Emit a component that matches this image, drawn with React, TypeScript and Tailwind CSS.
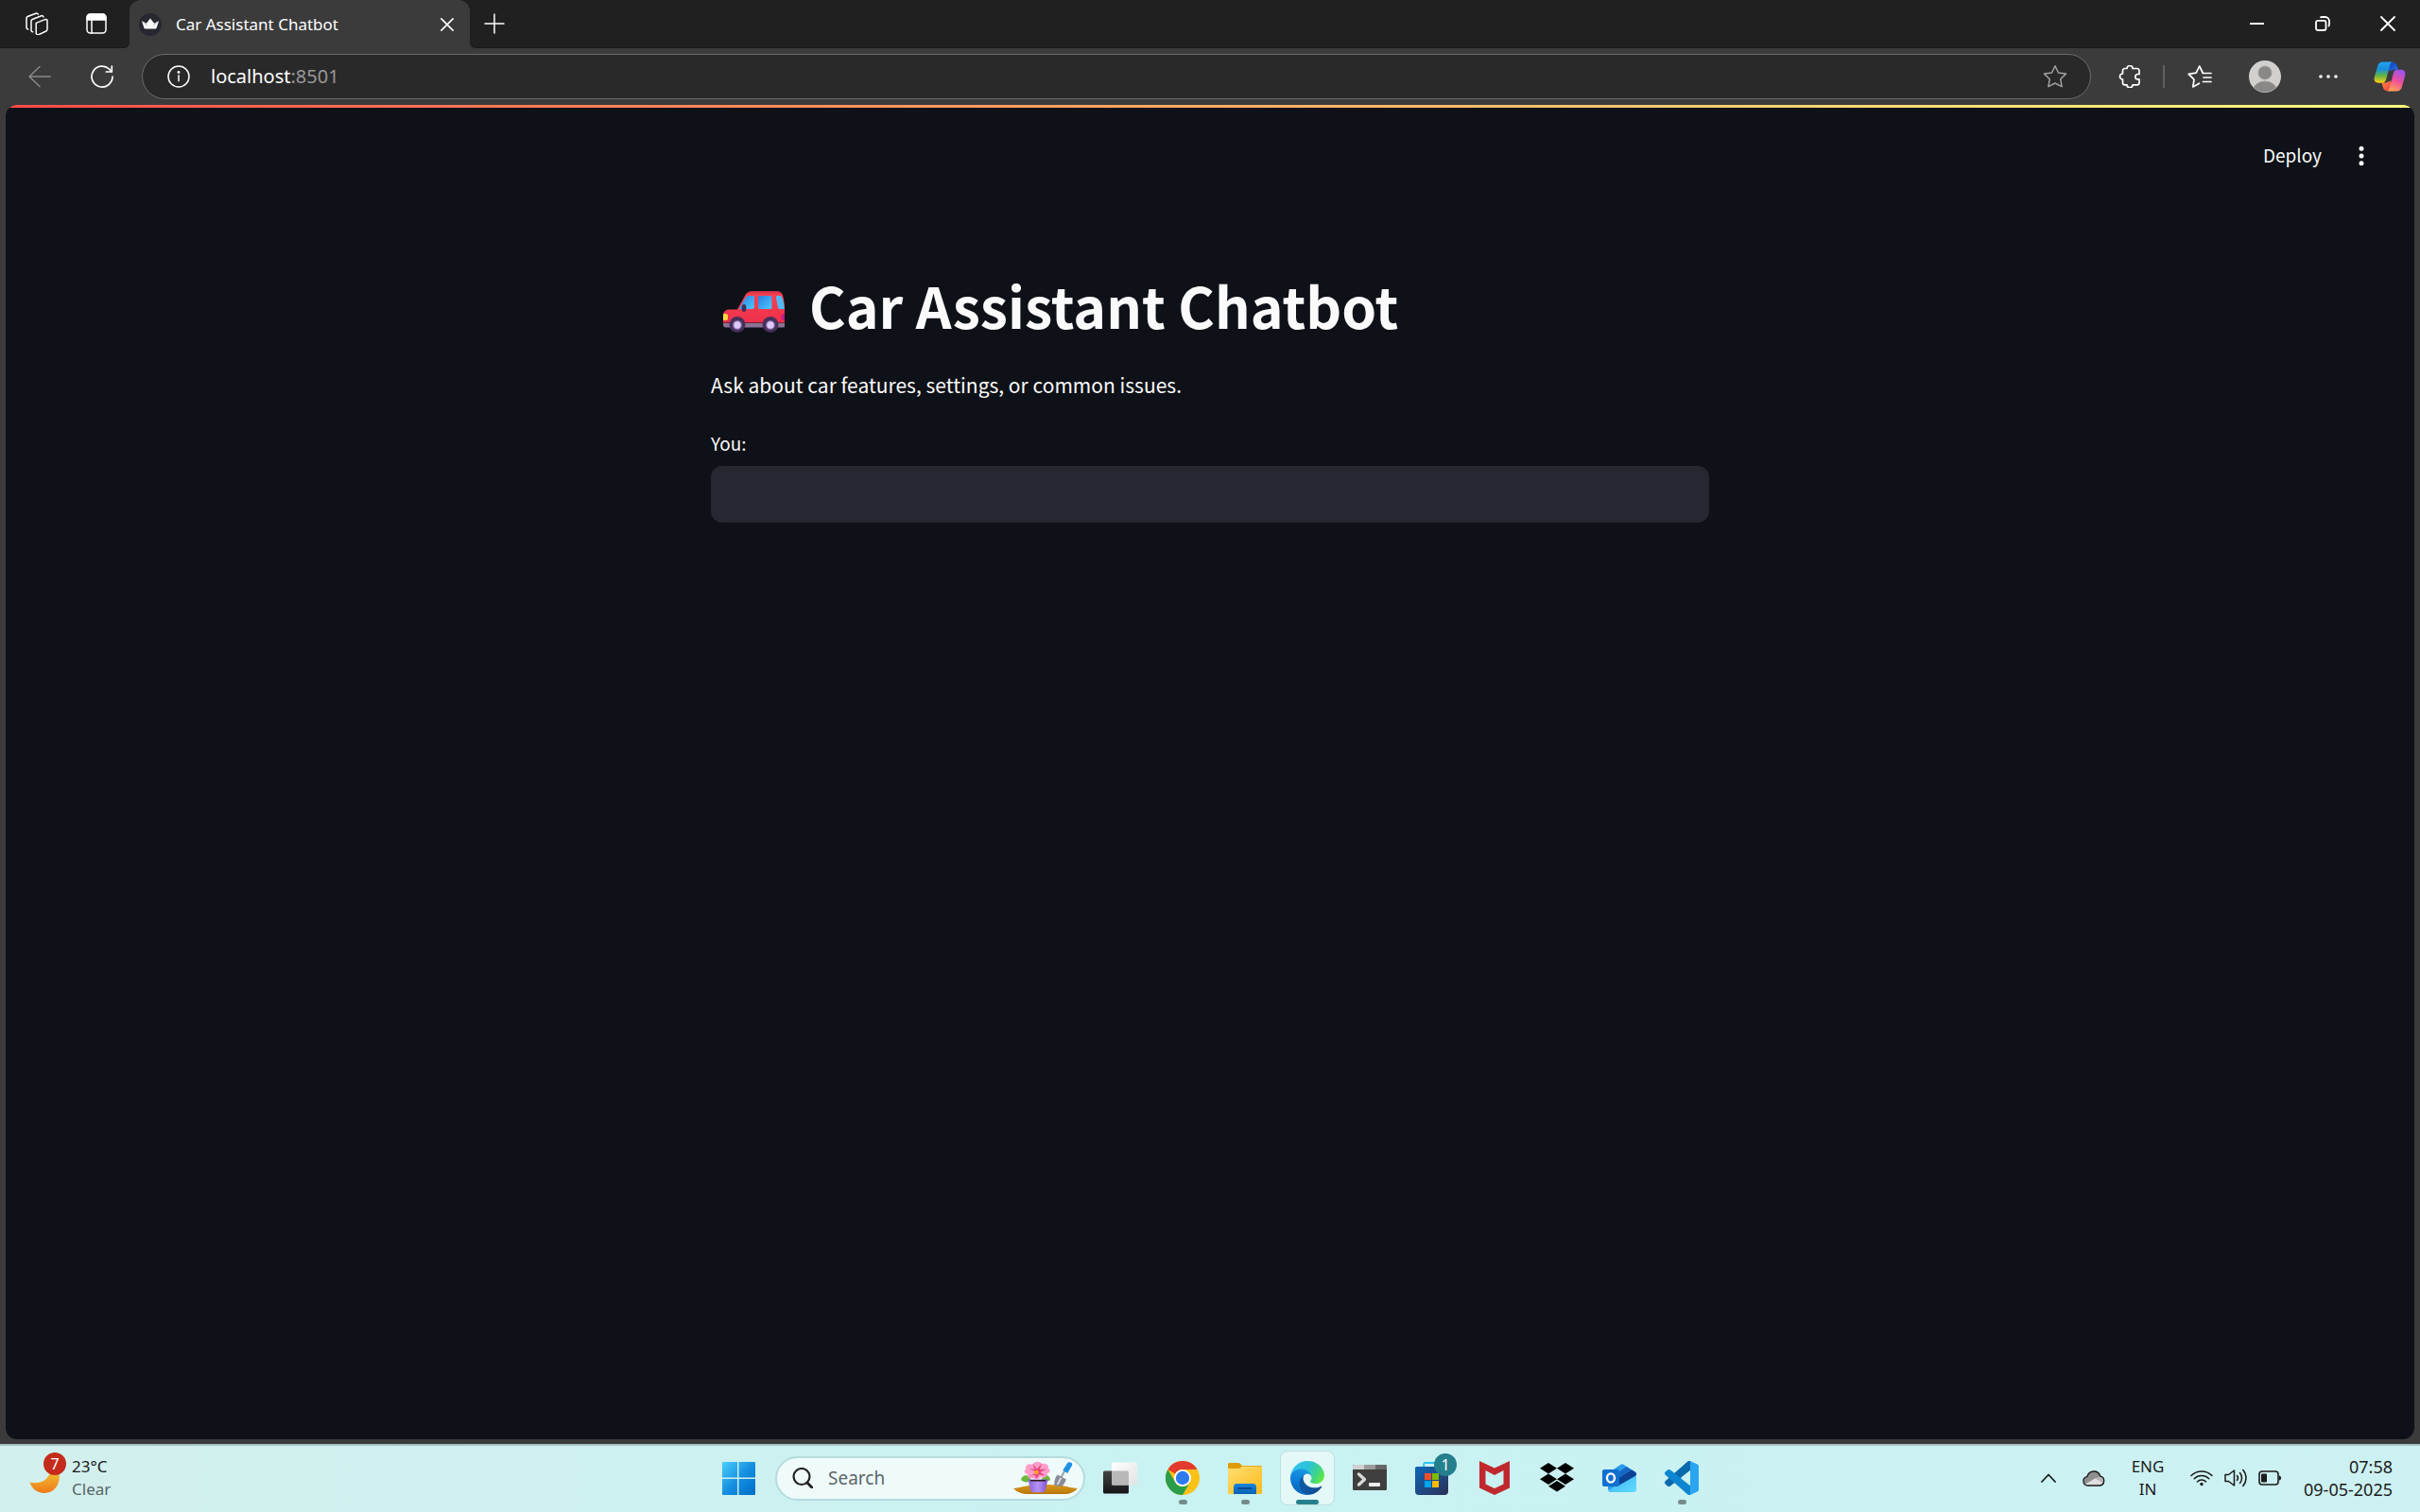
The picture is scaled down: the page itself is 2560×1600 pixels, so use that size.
import type { ReactNode } from "react";

const UI = "font-['Noto_Sans','Open_Sans',sans-serif]";
const PAGE = "font-['Noto_Sans_CJK_SC',sans-serif]";

/* ---------- browser chrome icons ---------- */

const stroke = {
  fill: "none",
  stroke: "currentColor",
  strokeWidth: 1.5,
  strokeLinecap: "round" as const,
  strokeLinejoin: "round" as const,
};

function WorkspacesIcon() {
  return (
    <svg viewBox="0 0 24 24" className="size-6" {...stroke}>
      <path d="M11.2 11.4 20.6 7.6c1.2-.4 2.4.3 2.4 1.4v9c0 .9-.5 1.6-1.300 2L14 23.600c-1.300.4-2.800-.4-2.800-1.700V11.400Z" />
      <path d="M7.600 20.800c-1-.2-1.600-.9-1.600-1.900V9.300c0-.8.500-1.500 1.200-1.800l9.600-3.800c1.100-.4 2 .2 2.200 1.200" />
      <path d="M2.800 17.900C1.600 17.800 1 17 1 16V6.300c0-.8.500-1.500 1.200-1.800l8.600-3.300c1.200-.4 2 0 2.500 1" />
    </svg>
  );
}

function TabActionsIcon() {
  return (
    <svg viewBox="0 0 24 24" className="size-6" {...stroke}>
      <rect x="2" y="2" width="20" height="20" rx="3.500" />
      <path d="M2 8V5.500A3.500 3.500 0 0 1 5.500 2h13A3.500 3.500 0 0 1 22 5.500V8Z" fill="currentColor" />
      <path d="M7 8v14" />
    </svg>
  );
}

function Favicon() {
  return (
    <svg viewBox="0 0 24 24" className="size-6">
      <circle cx="12" cy="12" r="12" fill="#262730" />
      <path d="m3 8.200 4.800 2.600L12 5.500l4.200 5.300L21 8.200 18.600 15.600c-.2.600-.7.900-1.300.9H6.700c-.6 0-1.100-.3-1.300-.9Z" fill="#fafafa" />
      <path d="m3 8.200 4.800 2.600 1.500 3.200ZM21 8.200l-4.800 2.600-1.500 3.200Z" fill="#b9bac0" />
    </svg>
  );
}

function CrossIcon({ className }: { className: string }) {
  return (
    <svg viewBox="0 0 16 16" className={className} {...stroke} strokeWidth={1.8}>
      <path d="m1 1 14 14M15 1 1 15" />
    </svg>
  );
}

function PlusIcon() {
  return (
    <svg viewBox="0 0 22 22" className="size-[22px]" {...stroke}>
      <path d="M11 1v20M1 11h20" />
    </svg>
  );
}

function BackIcon() {
  return (
    <svg viewBox="0 0 24 24" className="size-6" {...stroke}>
      <path d="M23.200 12H1M12 1.500 1 12l11 10.500" />
    </svg>
  );
}

function ReloadIcon() {
  return (
    <svg viewBox="0 0 24 24" className="size-6" {...stroke} strokeWidth={1.700}>
      <path d="M23 12A11 11 0 1 1 19.500 4L22 6.800" />
      <path d="M22.300 1v6h-6" />
    </svg>
  );
}

function InfoIcon() {
  return (
    <svg viewBox="0 0 24 24" className="size-6" {...stroke}>
      <circle cx="12" cy="12" r="11" />
      <path d="M12 10.800v6" />
      <circle cx="12" cy="7.500" r=".7" fill="currentColor" />
    </svg>
  );
}

function StarIcon() {
  return (
    <svg viewBox="0 0 26 26" className="size-[26px]" {...stroke}>
      <path d="M13 1.700 16.500 9l8 1.100-5.800 5.600 1.400 8L13 20l-7.100 3.700 1.400-8L1.500 10.100l8-1.100Z" />
    </svg>
  );
}

function PuzzleIcon() {
  return (
    <svg viewBox="0 0 24 24" className="size-6" {...stroke} strokeWidth={1.700}>
      <path d="M9 3.500a3 3 0 0 1 6 0h4.500A2.300 2.300 0 0 1 22 5.800V9.500h-1.500a2.700 2.700 0 0 0 0 5.400H22v3.600a2.300 2.300 0 0 1-2.300 2.300H15a3 3 0 0 1-6 0H6.800a2.300 2.300 0 0 1-2.300-2.300V15a3 3 0 0 1 0-6V5.800a2.300 2.300 0 0 1 2.300-2.300Z" />
    </svg>
  );
}

function FavoritesIcon() {
  return (
    <svg viewBox="0 0 26 24" className="h-6 w-[26px]" {...stroke} strokeWidth={1.700}>
      <path d="M16.200 8 12.700 1 9.200 8.200 1.200 9.400 7 15.200 5.800 23l6.700-3.800" />
      <path d="M16.200 8.500H25M17 13h8M16.500 17.500H25" />
    </svg>
  );
}

function Avatar() {
  return (
    <svg viewBox="0 0 34 34" className="size-[34px]">
      <defs>
        <clipPath id="avatar-clip">
          <circle cx="17" cy="17" r="16.500" />
        </clipPath>
      </defs>
      <circle cx="17" cy="17" r="17" fill="#d2d0ce" />
      <g clipPath="url(#avatar-clip)" fill="#8a8886" stroke="#a09e9b">
        <circle cx="17" cy="13" r="7" />
        <ellipse cx="17" cy="32" rx="12.500" ry="10" />
      </g>
    </svg>
  );
}

function MoreIcon() {
  return (
    <svg viewBox="0 0 22 6" className="h-1.5 w-[22px]" fill="currentColor">
      <circle cx="3" cy="3" r="1.800" />
      <circle cx="11" cy="3" r="1.800" />
      <circle cx="19" cy="3" r="1.800" />
    </svg>
  );
}

function CopilotIcon() {
  return (
    <svg viewBox="0 0 34 32" className="h-8 w-[34px]">
      <defs>
        <linearGradient id="cp-a" x1="0" y1="0" x2="0" y2="1">
          <stop offset="0" stopColor="#1fa2f0" />
          <stop offset=".35" stopColor="#1a8fdc" />
          <stop offset=".65" stopColor="#5fb548" />
          <stop offset="1" stopColor="#ffcf10" />
        </linearGradient>
        <linearGradient id="cp-b" x1=".7" y1="0" x2=".3" y2="1">
          <stop offset="0" stopColor="#9b52f0" />
          <stop offset=".5" stopColor="#ee4f9b" />
          <stop offset="1" stopColor="#ffa750" />
        </linearGradient>
        <linearGradient id="cp-c" x1="0" y1="0" x2="1" y2="1">
          <stop offset="0" stopColor="#1237b5" />
          <stop offset="1" stopColor="#2377ee" />
        </linearGradient>
        <linearGradient id="cp-d" x1="0" y1="0" x2="1" y2="1">
          <stop offset="0" stopColor="#ff8a3c" />
          <stop offset="1" stopColor="#f03a4a" />
        </linearGradient>
      </defs>
      <path d="M15 1h5.500c2 0 3.300 1 4 3l1.500 4.500h-4.500l-5 2Z" fill="url(#cp-c)" />
      <path d="M19 31h-5c-2 0-3.300-1-4-3L8.500 22.500H13l5-2Z" fill="url(#cp-d)" />
      <path d="M9.500.5H21c-2 0-3 1-3.600 3L13 19.500c-.6 2-1.800 3.200-4 3.200H5C1.500 22.700 0 20.500.8 16.500L4.300 4.500C5.200 1.800 7 .5 9.500.5Z" fill="url(#cp-a)" />
      <path d="M24.500 31.500H13c2 0 3-1 3.600-3L21 12c.6-2 1.800-3.200 4-3.200h4c3.500 0 5 2.200 4.200 6.200l-3.500 12.500c-.9 2.700-2.700 4-5.200 4Z" fill="url(#cp-b)" />
    </svg>
  );
}

/* ---------- page drawings ---------- */

function CarEmoji() {
  return (
    <svg viewBox="10 14 66 44" className="mt-3.5 h-11 w-[66px] shrink-0" role="img" aria-label="car">
      <defs>
        <linearGradient id="car-glass" x1="0" y1="0" x2="1" y2="1">
          <stop offset="0" stopColor="#2b7fe0" />
          <stop offset="1" stopColor="#4cc8ff" />
        </linearGradient>
        <linearGradient id="car-roof" x1="0" y1="0" x2="0" y2="1">
          <stop offset="0" stopColor="#c93048" />
          <stop offset=".12" stopColor="#f8404f" />
          <stop offset="1" stopColor="#ee304c" />
        </linearGradient>
      </defs>
      <path d="M10 48h65v3.500a1 1 0 0 1-1 1H13a3 3 0 0 1-3-3Z" fill="#8a7294" />
      <path d="M10 40c0-4 2.500-6.500 6.500-6.500H25l8-14.500c2-3.500 4-5 8-5h26c3 0 5 1.500 6 4.500 1.500 5 2 9 2 14.500v14.500H10Z" fill="url(#car-roof)" />
      <path d="m27 32.500 6.500-11c1-1.700 2-2.500 4-2.500h5.500v12a2 2 0 0 1-2 2h-13.500Z" fill="url(#car-glass)" />
      <rect x="47" y="19" width="14.500" height="14" rx="1.500" fill="url(#car-glass)" />
      <path d="M67 19h3c1 0 1.600.5 2 1.500 1.800 4 2.500 8 2.800 12.500h-4c-1.800 0-2.600-.6-2.900-2L66 21c-.2-1.200.1-2 1-2Z" fill="#4cbdf8" />
      <ellipse cx="32" cy="32" rx="2.400" ry="4" fill="#3a2e5c" />
      <path d="M10 38h2.500a2.500 2.500 0 0 1 2.500 2.500v2a2.500 2.500 0 0 1-2.500 2.500H10Z" fill="#ffd83a" />
      <path d="M75 38h-1.200a3 3 0 0 0-2.300 3.500 3 3 0 0 0 2.300 3.500H75Z" fill="#c01c86" />
      <circle cx="25" cy="49.500" r="8.500" fill="#46305a" />
      <circle cx="60" cy="49.500" r="8.500" fill="#46305a" />
      <circle cx="25" cy="50" r="5" fill="#8a6ca6" />
      <circle cx="60" cy="50" r="5" fill="#8a6ca6" />
      <circle cx="25" cy="50" r="3.700" fill="#ddc9f8" />
      <circle cx="60" cy="50" r="3.700" fill="#ddc9f8" />
    </svg>
  );
}

/* ---------- taskbar drawings ---------- */

function MoonIcon() {
  return (
    <svg viewBox="0 0 34 34" className="size-[34px]">
      <defs>
        <linearGradient id="moon" x1="0" y1="0" x2="0" y2="1">
          <stop offset=".3" stopColor="#f0b02c" />
          <stop offset="1" stopColor="#f07818" />
        </linearGradient>
      </defs>
      <path d="M31 9c5 10-1 24-14 24C9 33 3.500 28 1.500 21.500 12 24 22 20 23.500 8Z" fill="url(#moon)" />
    </svg>
  );
}

function StartIcon() {
  return (
    <svg viewBox="0 0 36 36" className="size-9">
      <defs>
        <linearGradient id="start" gradientUnits="userSpaceOnUse" x1="0" y1="0" x2="34" y2="34">
          <stop offset="0" stopColor="#4cd2ff" />
          <stop offset=".55" stopColor="#1590e0" />
          <stop offset="1" stopColor="#0070cc" />
        </linearGradient>
      </defs>
      <g fill="url(#start)">
        <path d="M2 1h15v16.500H1V2a1 1 0 0 1 1-1ZM18.500 1H35a1 1 0 0 1 1 1v15.500H18.500ZM1 19h16v17H2a1 1 0 0 1-1-1ZM18.500 19H36v16a1 1 0 0 1-1 1H18.500Z" />
      </g>
    </svg>
  );
}

function SearchIcon() {
  return (
    <svg viewBox="0 0 22 22" className="size-[22px]" fill="none" stroke="#202020" strokeWidth="2.200" strokeLinecap="round">
      <circle cx="10" cy="9.500" r="8.500" />
      <path d="m16 16 4.800 5" strokeWidth="2.800" />
    </svg>
  );
}

function GardenIcon() {
  return (
    <svg viewBox="0 0 68 36" className="h-9 w-[68px]">
      <defs>
        <linearGradient id="soil" x1="0" y1="0" x2="0" y2="1">
          <stop offset="0" stopColor="#d99a1c" />
          <stop offset="1" stopColor="#b87508" />
        </linearGradient>
        <linearGradient id="pot" x1="0" y1="0" x2="1" y2="0">
          <stop offset="0" stopColor="#8a62dc" />
          <stop offset=".5" stopColor="#b592f4" />
          <stop offset="1" stopColor="#7a50cc" />
        </linearGradient>
      </defs>
      <path d="M0 29c10-1 12-4 34-4s22 3 34 4c-4 4-8 6-14 6H16C9 35 4 33 0 29Z" fill="url(#soil)" />
      <path d="M8 20c1-4 4-6 9-4l2 5c-4 2-8 2-11-1ZM39 20c0-3-2-5-6-5l-4 5c3 2 7 2 10 0Z" fill="#6db83a" />
      <path d="M15.500 19.500h21l-2.500 11c-.5 2-2 2.800-4 2.800h-8c-2 0-3.500-.8-4-2.800Z" fill="url(#pot)" />
      <path d="M18 20h16v1.500H18Z" fill="#2c1d18" />
      <path d="M13 9c-1-4 3-7 7-5 2-4 8-4 10-1 4-1 8 1 7 5 3 1 2 5-1 5 0 4-4 6-7 4-2 3-6 3-8 1-4 1-7-1-6-4-4-1-4-4-2-5Z" fill="#ff9ecb" />
      <path d="m24.500 12-8-4 6 1-2-6 4.500 5.500 5-6-2 6.500 7-.5-6.500 3.500 5 3.500-6.500-1-2.500 4.500-2-4.500-6 2Z" fill="#e8487f" />
      <circle cx="24.500" cy="12" r="2.200" fill="#f7a51e" />
      <path d="m60 1.500 1.500.5c1 .8 1 2 .4 3l-4.700 8-5-3 4.800-7.500c.8-1.200 1.800-1.600 3-1Z" fill="#1e90e8" />
      <path d="m54 11-4 7" stroke="#9aa0a6" strokeWidth="2" />
      <path d="m46.500 14.500 9.500 5-2.500 5c-2 2.500-6 3-10 1.500-.8-3 .5-8 3-11.500Z" fill="#878d96" />
      <path d="m50.500 18-4 7" stroke="#d7dadf" strokeWidth="2" />
    </svg>
  );
}

function TaskViewIcon() {
  return (
    <svg viewBox="0 0 36 36" className="size-9">
      <defs>
        <linearGradient id="tv-d" x1="0" y1="0" x2="0" y2="1">
          <stop offset="0" stopColor="#444" />
          <stop offset="1" stopColor="#151515" />
        </linearGradient>
        <linearGradient id="tv-l" x1="0" y1="0" x2="1" y2="1">
          <stop offset="0" stopColor="#fff" />
          <stop offset="1" stopColor="#e2e2e2" />
        </linearGradient>
      </defs>
      <rect x="0" y="10.500" width="27" height="24" rx="1.500" fill="url(#tv-d)" />
      <rect x="9" y="1.500" width="27" height="24" rx="1.500" fill="url(#tv-l)" />
      <path d="M9 10.500h16.500a1.500 1.500 0 0 1 1.500 1.500v13.500H10.500A1.500 1.500 0 0 1 9 24Z" fill="#b8b8b8" />
    </svg>
  );
}

function ChromeIcon() {
  return (
    <svg viewBox="0 0 36 36" className="size-9">
      <circle cx="18" cy="18" r="18" fill="#fbc116" />
      <path d="M2.400 9A18 18 0 0 1 33.600 9H18a9 9 0 0 0-7.800 4.500Z" fill="#e33b2e" />
      <path d="M2.400 9A18 18 0 0 0 18 36l7.800-13.500a9 9 0 0 1-15.600 0Z" fill="#2a9d4a" />
      <circle cx="18" cy="18" r="9" fill="#fff" />
      <circle cx="18" cy="18" r="7.200" fill="#2f7bee" />
    </svg>
  );
}

function ExplorerIcon() {
  return (
    <svg viewBox="0 0 36 36" className="size-9">
      <defs>
        <linearGradient id="folder" x1="0" y1="0" x2="1" y2="1">
          <stop offset="0" stopColor="#ffdf75" />
          <stop offset="1" stopColor="#fbb917" />
        </linearGradient>
        <linearGradient id="folder-blue" x1="0" y1="0" x2="0" y2="1">
          <stop offset="0" stopColor="#1686dc" />
          <stop offset="1" stopColor="#0a62b4" />
        </linearGradient>
      </defs>
      <path d="M0 3.500A1.500 1.500 0 0 1 1.500 2h9.700c.6 0 1 .2 1.400.6L15 5h19.500A1.500 1.500 0 0 1 36 6.500V10H0Z" fill="#dd9c0a" />
      <path d="M0 8h11.500c.7 0 1.300-.3 1.800-.8L15 5.800h21v27.700a1.500 1.500 0 0 1-1.500 1.500h-33A1.500 1.500 0 0 1 0 33.500Z" fill="url(#folder)" />
      <path d="M6 27.500a3.500 3.500 0 0 1 3.500-3.500h17a3.500 3.500 0 0 1 3.500 3.500V35H6Z" fill="url(#folder-blue)" />
      <rect x="10" y="28" width="15.500" height="2" rx="1" fill="#0a4a90" />
    </svg>
  );
}

function EdgeIcon() {
  return (
    <svg viewBox="0 0 256 256" className="size-9">
      <defs>
        <linearGradient id="edge-a" x1=".2" y1=".5" x2="1" y2=".5">
          <stop offset="0" stopColor="#0c59a4" />
          <stop offset="1" stopColor="#114a8b" />
        </linearGradient>
        <linearGradient id="edge-b" x1=".6" y1="0" x2=".3" y2="1">
          <stop offset="0" stopColor="#1b9de2" />
          <stop offset=".5" stopColor="#0b7fd8" />
          <stop offset="1" stopColor="#0a60b8" />
        </linearGradient>
        <linearGradient id="edge-c" x1="0" y1=".3" x2="1" y2=".7">
          <stop offset="0" stopColor="#35c1f1" />
          <stop offset=".45" stopColor="#2cc3d5" />
          <stop offset=".8" stopColor="#44d87a" />
          <stop offset="1" stopColor="#66eb3c" />
        </linearGradient>
      </defs>
      <path d="M231 190.500c-3.400 1.800-7 3.400-10.600 4.700a101.900 101.900 0 0 1-35.900 6.400c-47.300 0-88.500-32.500-88.500-74.300a31.500 31.500 0 0 1 16.400-27.300c-42.800 1.800-53.800 46.400-53.800 72.500 0 74 68.100 81.400 82.800 81.400 7.900 0 19.800-2.300 27-4.600l1.300-.4a128.300 128.300 0 0 0 66.600-52.800 4 4 0 0 0-5.300-5.600Z" fill="url(#edge-a)" />
      <path d="M105.700 241.400a79.200 79.200 0 0 1-22.700-21.300 80.700 80.700 0 0 1 29.500-120c3.100-1.500 8.500-4.100 15.600-4a32.400 32.400 0 0 1 25.700 13c4.100 5.500 6.300 11.700 6.300 18.600 0-.2 24.400-79.600-80-79.600-43.900 0-80 41.700-80 78.200a130.200 130.200 0 0 0 12 56 128 128 0 0 0 156.400 67 75.500 75.500 0 0 1-62.800-7.900Z" fill="url(#edge-b)" />
      <path d="M152.300 148.900c-.9 1-3.400 2.500-3.400 5.600 0 2.600 1.700 5.200 4.800 7.300 14.300 10 41.400 8.600 41.500 8.600a59.600 59.600 0 0 0 30.300-8.400 61.400 61.400 0 0 0 30.400-52.800c.3-22.400-8-37.300-11.300-43.900C223.500 23.900 177.700 0 128 0A128 128 0 0 0 0 126.200c.5-36.500 36.800-66 80-66 3.500 0 23.500.3 42 10a72.600 72.600 0 0 1 30.900 29.400c6.100 10.600 7.200 24.100 7.200 29.500s-2.700 13.300-7.800 19.800Z" fill="url(#edge-c)" />
    </svg>
  );
}

function TerminalIcon() {
  return (
    <svg viewBox="0 0 36 36" className="size-9">
      <rect x="0" y="4" width="36" height="27" rx="1.500" fill="#3f3f3f" />
      <path d="M1.500 4H12v5H0V5.500A1.500 1.500 0 0 1 1.500 4Z" fill="#d0d0d0" />
      <path d="M12 4h12v5H12Z" fill="#9b9b9b" />
      <path d="M24 4h10.500A1.500 1.500 0 0 1 36 5.500V9H24Z" fill="#686868" />
      <path d="m6.500 14 6 5.500-6 5.500" fill="none" stroke="#d8d8d8" strokeWidth="3.400" strokeLinecap="round" strokeLinejoin="round" />
      <rect x="17" y="23" width="12" height="4" rx="1" fill="#ededed" />
    </svg>
  );
}

function StoreIcon() {
  return (
    <svg viewBox="0 0 36 36" className="size-9">
      <defs>
        <linearGradient id="store" x1="0" y1="0" x2="1" y2="1">
          <stop offset="0" stopColor="#0f67b8" />
          <stop offset="1" stopColor="#2c2f55" />
        </linearGradient>
      </defs>
      <path d="M9.200 7V3.500c0-.8.500-1.500 1.500-1.500H25v5" fill="none" stroke="#2fc0f0" strokeWidth="1.800" />
      <path d="M1.500 6h32A1.500 1.500 0 0 1 35 7.500V32a4 4 0 0 1-4 4H4a4 4 0 0 1-4-4V7.500A1.500 1.500 0 0 1 1.500 6Z" fill="url(#store)" />
      <path d="M10 13h7v7h-7Z" fill="#f25022" />
      <path d="M18 13h7v7h-7Z" fill="#7fba00" />
      <path d="M10 21h7v7h-7Z" fill="#00a4ef" />
      <path d="M18 21h7v7h-7Z" fill="#ffb900" />
    </svg>
  );
}

function McAfeeIcon() {
  return (
    <svg viewBox="0 0 36 36" className="size-9">
      <path d="M2 0 18 7.500 34 0v28.500L18 36 2 28.500ZM8.500 10v14.500L18 29l9.500-4.500V10L18 15Z" fill="#c0282d" fillRule="evenodd" />
    </svg>
  );
}

function DropboxIcon() {
  return (
    <svg viewBox="0 0 36 36" className="size-9">
      <path d="m9 2 9 5.700-9 5.700-9-5.700ZM27 2l9 5.700-9 5.700-9-5.700ZM9 13.500l9 5.700-9 5.700-9-5.700ZM27 13.500l9 5.700-9 5.700-9-5.700ZM9 26.800l9-5.700 9 5.700-9 5.700Z" fill="#000" />
    </svg>
  );
}

function OutlookIcon() {
  return (
    <svg viewBox="0 0 36 36" className="size-9">
      <defs>
        <linearGradient id="ol" x1="0" y1="0" x2="1" y2="1">
          <stop offset="0" stopColor="#3fb0f5" />
          <stop offset="1" stopColor="#5fdcff" />
        </linearGradient>
      </defs>
      <path d="M6 13 19.500 3.700c1-.7 2-.7 3 0L36 12.500V29a4 4 0 0 1-4 4H10a4 4 0 0 1-4-4Z" fill="#2a9cec" />
      <path d="M36 13v16a4 4 0 0 1-4 4H10c-1.500 0-2.800-.8-3.500-2Z" fill="url(#ol)" />
      <path d="M13 15 25.500 6l5 3.200L18 19.500Z" fill="#1668c4" />
      <path d="M18 18 31 9.300l4 2.700c1.500 1.200 1.300 3-.3 4L18 25.500Z" fill="#0b4296" />
      <rect x="0" y="9" width="18" height="18" rx="2" fill="#1170cf" />
      <ellipse cx="9" cy="18" rx="4" ry="4.600" fill="none" stroke="#fff" strokeWidth="2.400" />
    </svg>
  );
}

function VSCodeIcon() {
  return (
    <svg viewBox="0 0 36 36" className="size-9">
      <path d="M27 0v9.800L6 26.500c-1 .8-2 .7-3 0L.7 24.400c-1-.9-1-2.200 0-3.200L24 .8C25 0 26 0 27 0Z" fill="#0a69ad" />
      <path d="M27 36v-9.800L6 9.500c-1-.8-2-.7-3 0L.7 11.600c-1 .9-1 2.200 0 3.200L24 35.200c1 .8 2 .8 3 .8Z" fill="#0c86d0" />
      <path d="M27 0l7.500 3.500c1 .5 1.500 1.200 1.500 2.300v24.400c0 1.100-.5 1.800-1.500 2.300L27 36Z" fill="#2aa5f2" />
    </svg>
  );
}

function ChevronUpIcon() {
  return (
    <svg viewBox="0 0 16 10" className="h-2.5 w-4" fill="none" stroke="#1b1b1b" strokeWidth="1.800" strokeLinecap="round" strokeLinejoin="round">
      <path d="m1 9 7-7.500L15 9" />
    </svg>
  );
}

function CloudIcon() {
  return (
    <svg viewBox="0 0 24 17" className="h-[17px] w-6">
      <path d="M5.500 16a4.700 4.700 0 0 1-.8-9.300C6 3 8.800 1 12 1c3.400 0 6 2.200 6.900 5.200A5 5 0 0 1 18.300 16Z" fill="#8f8f8f" />
      <path d="m3 14.500 10.500-6.300L22 13c-.8 1.800-2 3-3.700 3H5.500Z" fill="#dedede" />
      <path d="m13.500 8.200 5.400-2c3 .3 4.600 3.500 3.600 6.500Z" fill="#b9b9b9" />
      <path d="M5.500 16a4.700 4.700 0 0 1-.8-9.300C6 3 8.800 1 12 1c3.400 0 6 2.200 6.900 5.200A5 5 0 0 1 18.300 16Z" fill="none" stroke="#161616" strokeWidth="1.300" />
    </svg>
  );
}

function WifiIcon() {
  return (
    <svg viewBox="0 0 24 18" className="h-[18px] w-6" fill="none" stroke="#1b1b1b" strokeWidth="1.500" strokeLinecap="round">
      <path d="M1 6.500a15.500 15.500 0 0 1 22 0M4.200 9.800a11 11 0 0 1 15.600 0M7.400 13a6.500 6.500 0 0 1 9.200 0" />
      <circle cx="12" cy="15.500" r="1.700" fill="#1b1b1b" stroke="none" />
    </svg>
  );
}

function VolumeIcon() {
  return (
    <svg viewBox="0 0 24 20" className="h-5 w-6" fill="none" stroke="#1b1b1b" strokeWidth="1.500" strokeLinecap="round" strokeLinejoin="round">
      <path d="M1 6.500h3.500L10.500 2v16l-6-4.500H1Z" />
      <path d="M13.500 7.500c1.200 1.500 1.200 3.500 0 5M16.500 4.500c2.700 3.200 2.700 7.800 0 11M19.800 1.500c4.200 5 4.200 12 0 17" />
    </svg>
  );
}

function BatteryIcon() {
  return (
    <svg viewBox="0 0 24 16" className="h-4 w-6">
      <rect x="1" y="1" width="20" height="14" rx="3" fill="none" stroke="#1b1b1b" strokeWidth="1.600" />
      <rect x="3" y="3.500" width="6" height="9" rx="1" fill="#1b1b1b" />
      <path d="M22 5.500c1.300.2 2 1.200 2 2.500s-.7 2.300-2 2.500Z" fill="#1b1b1b" />
    </svg>
  );
}

/* ---------- building blocks ---------- */

function IconButton({ label, className, children }: { label: string; className: string; children: ReactNode }) {
  return (
    <button type="button" aria-label={label} className={`flex shrink-0 items-center justify-center ${className}`}>
      {children}
    </button>
  );
}

type App = { name: string; icon: ReactNode; running?: boolean; active?: boolean; badge?: string };

const apps: App[] = [
  { name: "Task view", icon: <TaskViewIcon /> },
  { name: "Google Chrome", icon: <ChromeIcon />, running: true },
  { name: "File Explorer", icon: <ExplorerIcon />, running: true },
  { name: "Microsoft Edge", icon: <EdgeIcon />, active: true },
  { name: "Terminal", icon: <TerminalIcon /> },
  { name: "Microsoft Store", icon: <StoreIcon />, badge: "1" },
  { name: "McAfee", icon: <McAfeeIcon /> },
  { name: "Dropbox", icon: <DropboxIcon /> },
  { name: "Outlook", icon: <OutlookIcon /> },
  { name: "Visual Studio Code", icon: <VSCodeIcon />, running: true },
];

function TaskbarApp({ app }: { app: App }) {
  return (
    <button
      type="button"
      aria-label={app.name}
      className={`relative mx-1 flex h-[58px] w-[58px] items-center justify-center rounded-lg border ${
        app.active ? "border-[#bfe0e0] bg-[#e4f8f8]" : "border-transparent"
      }`}
    >
      {app.icon}
      {app.badge && (
        <span className="absolute top-0.5 right-0.5 flex size-6 items-center justify-center rounded-full bg-[#24808c] text-base leading-none text-white">
          {app.badge}
        </span>
      )}
      {app.running && <span className="absolute bottom-0 h-[5px] w-[9px] rounded-full bg-[#748c8c]" />}
      {app.active && <span className="absolute bottom-0 h-[5px] w-6 rounded-full bg-[#24808c]" />}
    </button>
  );
}

function TabStrip() {
  return (
    <div className="flex h-[51px] bg-linear-to-b from-[#202020] from-50% to-[#3b3b3b] to-50%">
      <div className="flex w-[137px] items-center rounded-br-md border-b border-[#1a1a1a] bg-[#202020] pl-2 text-white">
        <IconButton label="Workspaces" className="h-10 w-[62px]"><WorkspacesIcon /></IconButton>
        <IconButton label="Tab actions" className="h-10 w-[64px]"><TabActionsIcon /></IconButton>
      </div>
      <div className="flex w-[360px] items-center rounded-t-xl bg-[#3b3b3b] pr-3 pl-2.5 text-white">
        <Favicon />
        <span className="ml-[15px] flex-1 text-[17px] leading-6">Car Assistant Chatbot</span>
        <IconButton label="Close tab" className="size-6"><CrossIcon className="size-3.5" /></IconButton>
      </div>
      <div className="flex flex-1 items-center justify-between rounded-bl-md border-b border-[#1a1a1a] bg-[#202020] text-white">
        <IconButton label="New tab" className="h-10 w-[52px]"><PlusIcon /></IconButton>
        <div className="flex">
          <IconButton label="Minimize" className="h-12 w-[69px]">
            <span className="h-0.5 w-[15px] bg-white" />
          </IconButton>
          <IconButton label="Restore" className="h-12 w-[69px]">
            <svg viewBox="0 0 16 16" className="size-4" fill="none" stroke="currentColor" strokeWidth="1.800">
              <rect x="1" y="4.800" width="10.500" height="10.200" rx="2" />
              <path d="M5.500 1.700C6 1 6.500 1 7.500 1h3.300A4.300 4.300 0 0 1 15 5.300v3c0 1.200-.2 2-1 2.700" />
            </svg>
          </IconButton>
          <IconButton label="Close window" className="h-12 w-[69px]"><CrossIcon className="size-4" /></IconButton>
        </div>
      </div>
    </div>
  );
}

function Toolbar() {
  return (
    <div className="flex h-[60px] items-center bg-[#3b3b3b] pl-2 text-white">
      <IconButton label="Back" className="h-10 w-[68px] text-[#8a8a8a]"><BackIcon /></IconButton>
      <IconButton label="Reload" className="h-10 w-[64px]"><ReloadIcon /></IconButton>
      <div className="ml-2.5 flex h-12 flex-1 items-center rounded-full border border-[#6a6a6a] bg-[#292929] pr-[22px] pl-[26px]">
        <IconButton label="Site information" className="size-6"><InfoIcon /></IconButton>
        <button type="button" aria-label="Address" className="ml-[22px] flex-1 text-left text-xl leading-7 text-[#989898]">
          <span className="text-white">localhost</span>:8501
        </button>
        <IconButton label="Add to favorites" className="size-[30px] text-[#a0a0a0]"><StarIcon /></IconButton>
      </div>
      <IconButton label="Extensions" className="ml-1.5 h-10 w-[70px]"><PuzzleIcon /></IconButton>
      <span className="h-6 w-0.5 bg-[#5f5f5f]" />
      <IconButton label="Favorites" className="ml-0.5 h-10 w-[70px]"><FavoritesIcon /></IconButton>
      <IconButton label="Profile" className="h-10 w-[68px]"><Avatar /></IconButton>
      <IconButton label="Settings and more" className="h-10 w-[66px]"><MoreIcon /></IconButton>
      <IconButton label="Copilot" className="h-10 w-16"><CopilotIcon /></IconButton>
    </div>
  );
}

function ChatPage() {
  return (
    <div className="flex flex-1 bg-[#3b3b3b] px-1.5 pb-[5px]">
      <div className={`flex-1 overflow-hidden rounded-xl bg-[#0e1117] text-[#fafafa] ${PAGE}`}>
        <div className="h-[3px] bg-linear-to-r from-[#ff4b4b] to-[#fffd80]" />
        <header className="flex h-[102px] items-center justify-end pr-[30px]">
          <button type="button" className="px-4 pb-0.5 text-[19px] leading-8">Deploy</button>
          <IconButton label="Main menu" className="h-10 w-[52px]">
            <svg viewBox="0 0 6 22" className="h-[22px] w-1.5" fill="currentColor">
              <circle cx="3" cy="3.300" r="2.500" />
              <circle cx="3" cy="11" r="2.500" />
              <circle cx="3" cy="18.700" r="2.500" />
            </svg>
          </IconButton>
        </header>
        <main className="mx-auto flex w-full max-w-[1056px] flex-col pt-[67px]">
          <h1 className="flex h-20 items-center gap-[25px] pl-[13px] text-[59px] leading-[80px] font-bold">
            <CarEmoji />
            <span>Car Assistant Chatbot</span>
          </h1>
          <p className="mt-[26px] text-[21px] leading-9">Ask about car features, settings, or common issues.</p>
          <label htmlFor="question" className="mt-[26px] text-[19px] leading-9">You:</label>
          <input id="question" type="text" className="mt-1.5 h-[60px] w-full rounded-xl bg-[#262730] px-4 text-[21px] outline-none" />
        </main>
      </div>
    </div>
  );
}

function Taskbar() {
  return (
    <footer className="grid h-[72px] grid-cols-[1fr_auto_1fr] items-center border-t-2 border-[#a9c4c4] bg-linear-to-r from-[#d2f0ed] via-[#c9f2f2] to-[#cdf1f2] pb-0.5 text-[#1b1b1b]">
      <button type="button" className="flex items-center justify-self-start pl-[30px] text-left text-[17px] leading-6">
        <span className="relative">
          <MoonIcon />
          <span className="absolute -top-2.5 left-4 flex size-6 items-center justify-center rounded-full bg-[#c42b1c] text-base leading-none text-white">7</span>
        </span>
        <span className="ml-3 flex flex-col">
          <span>23°C</span>
          <span className="text-[#566666]">Clear</span>
        </span>
      </button>

      <div className="flex items-center">
        <IconButton label="Start" className="h-[58px] w-[66px]"><StartIcon /></IconButton>
        <label className="mr-1 ml-1.5 flex h-[47px] w-[328px] items-center rounded-full border-2 border-[#b5dcdc] bg-[#effbfb] pr-1.5 pl-4">
          <SearchIcon />
          <input
            type="text"
            aria-label="Search"
            placeholder="Search"
            className="ml-4 w-0 flex-1 bg-transparent text-[19px] leading-7 outline-none placeholder:text-[#5c6666]"
          />
          <GardenIcon />
        </label>
        {apps.map((app) => (
          <TaskbarApp key={app.name} app={app} />
        ))}
      </div>

      <div className="flex items-center justify-self-end pr-[29px] text-[17px] leading-6">
        <IconButton label="Show hidden icons" className="h-12 w-9"><ChevronUpIcon /></IconButton>
        <IconButton label="OneDrive" className="ml-2.5 h-12 w-10"><CloudIcon /></IconButton>
        <button type="button" className="ml-3 w-[50px] text-center">
          ENG
          <br />
          IN
        </button>
        <button type="button" aria-label="Network, volume and battery" className="ml-5 flex items-center gap-3">
          <WifiIcon />
          <VolumeIcon />
          <BatteryIcon />
        </button>
        <button type="button" className="ml-6 text-right text-lg leading-6">
          07:58
          <br />
          09-05-2025
        </button>
      </div>
    </footer>
  );
}

export default function App() {
  return (
    <div className={`flex min-h-screen flex-col ${UI}`}>
      <TabStrip />
      <Toolbar />
      <ChatPage />
      <Taskbar />
    </div>
  );
}
